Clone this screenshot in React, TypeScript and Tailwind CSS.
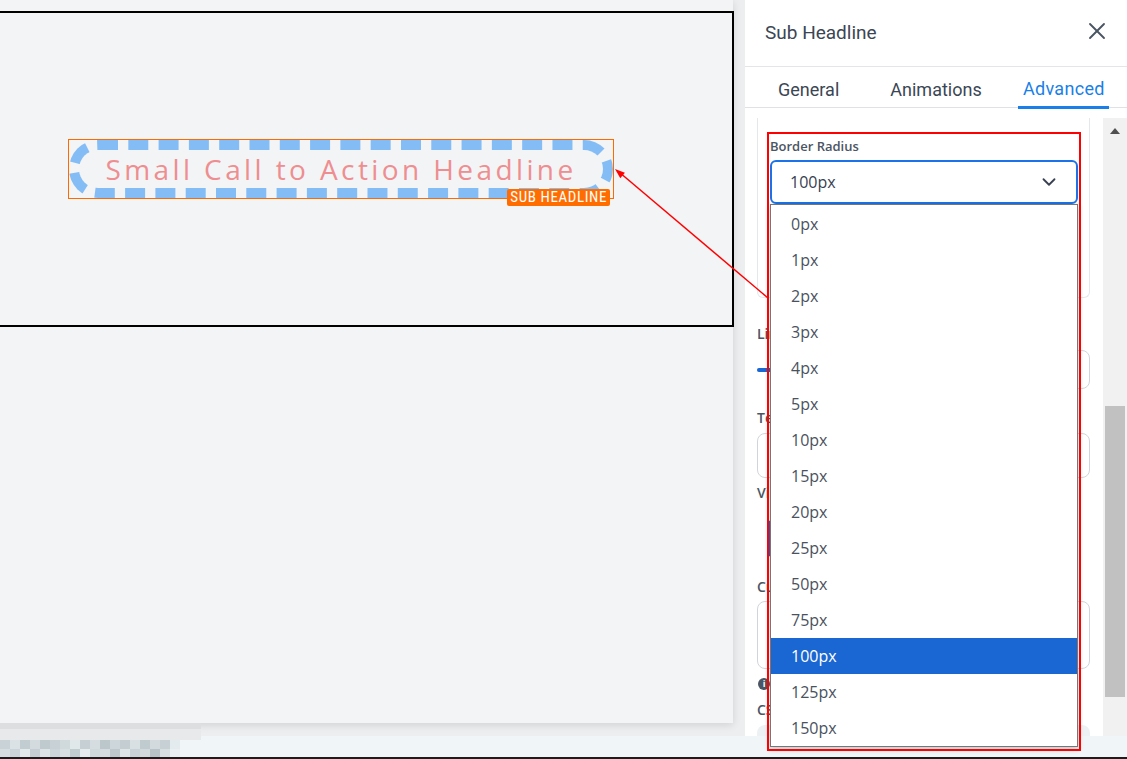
import { X, ChevronDown } from "lucide-react"

const radiusOptions = ["0px", "1px", "2px", "3px", "4px", "5px", "10px", "15px", "20px", "25px", "50px", "75px", "100px", "125px", "150px"]

// blurred bit in the bottom-left corner
const pixelColors = [
  "#c9d3d7", "#dbe2e5", "#c2cdd2", "#d3dbde", "#bfcace", "#c8d1d5", "#d0d9dc", "#e1e8ea", "#c6d0d4",
  "#d5dde0", "#bcc7cc", "#cdd6da", "#c4ced2", "#d9e0e3", "#c0cbcf", "#d2dadd", "#c7d1d5", "#e4ebee",
  "#d6dee1", "#cbd4d8", "#e3eaec", "#c5cfd3", "#dde4e7", "#ccd5d9", "#d8dfe2", "#c1ccd0", "#e6ecee",
  "#cfd8db", "#d4dcdf", "#bdc8cd", "#dfe6e8", "#c9d2d6", "#d1d9dc", "#b8c3c8", "#d7dfe1", "#eaf0f2",
]

export default function App() {
  return (
    <div className="relative w-[1127px] h-[759px] overflow-hidden flex flex-col border-b-2 border-[#1c1c1c]" style={{ fontFamily: '"Open Sans", sans-serif' }}>
      <div className="flex h-[736px] shrink-0">
        {/* Canvas */}
        <div className="w-[745px] flex flex-col bg-[#eceef0]">
          <div className="w-[733px] h-[723px] shrink-0 bg-[#f3f4f6] pt-[11px] shadow-[0_2px_8px_rgba(0,0,0,0.12)]">
            <div className="-ml-[2px] w-[736px] h-[316px] border-2 border-black pl-[68px] pt-[126px]">
              <div className="relative w-[546px] h-[60px] border border-[#ff6a00]">
                <div className="w-full h-full rounded-[100px] border-[10px] border-dashed border-[#84bdf5] flex items-center justify-center">
                  <span className="text-[28px] leading-none tracking-[3.4px] text-[#ee8e90] -mt-[1px]" style={{ fontFamily: '"Open Sans", sans-serif' }}>
                    Small Call to Action Headline
                  </span>
                </div>
                <div
                  className="absolute right-[3px] top-[49px] h-[17px] px-[3px] rounded-[2px] bg-[#ff6d00] text-white text-[15px] leading-[17px] tracking-[0.6px]"
                  style={{ fontFamily: '"Liberation Sans Narrow", "Roboto Condensed", "Liberation Sans", sans-serif' }}
                >
                  SUB HEADLINE
                </div>
              </div>
            </div>
          </div>
          <div className="flex-1 flex">
            <div className="w-[201px] flex flex-col">
              <div className="h-[6px] bg-[#dcdee0]" />
              <div className="flex-1 bg-[#e8e9eb]" />
            </div>
          </div>
        </div>

        {/* Settings panel */}
        <div className="w-[382px] bg-white flex flex-col" style={{ fontFamily: "Roboto, sans-serif" }}>
          <div className="h-[67px] shrink-0 flex items-center justify-between pl-[20px] pr-[16px] border-b border-[#e3e5e8]">
            <span className="text-[19px] text-[#3b4654]">Sub Headline</span>
            <X size={28} strokeWidth={1.6} className="text-[#4a5562] -mt-[5px]" />
          </div>
          <div className="h-[41px] shrink-0 flex border-b border-[#dfe1e4]">
            <div className="flex-1 flex justify-center">
              <span className="h-full pt-[4px] flex items-center text-[18px] text-[#3b4654]">General</span>
            </div>
            <div className="flex-1 flex justify-center">
              <span className="h-full pt-[4px] flex items-center text-[18px] text-[#3b4654]">Animations</span>
            </div>
            <div className="flex-1 flex justify-center">
              <span className="h-[42px] -mb-[1px] pt-[4px] pl-[5px] pr-[4px] flex items-center text-[18px] tracking-[0.3px] text-[#1a7fe8] border-b-[3px] border-[#1a7fe8]">Advanced</span>
            </div>
          </div>

          <div className="flex-1 pt-[10px] flex min-h-0">
            <div className="flex-1 pl-[12px] pr-[13px]" style={{ fontFamily: '"Open Sans", sans-serif' }}>
              <div className="relative h-[180px] border border-t-0 border-[#e5e7eb] rounded-b-[6px] pl-[12px] pr-[11px] pt-[19px]">
                <div className="text-[13px] leading-[18px] font-semibold text-[#4b5563]">Border Radius</div>
                <div className="mt-[5px] h-[44px] border-2 border-[#1a73e8] rounded-[6px] flex items-center justify-between pl-[18px] pr-[16px]">
                  <span className="text-[16px] text-[#374151]">100px</span>
                  <ChevronDown size={22} strokeWidth={2} className="text-[#374151]" />
                </div>

                {/* open dropdown list */}
                <div className="absolute left-[12px] top-[86px] w-[308px] pt-[1px] bg-white border border-[#767676] shadow-[0_2px_6px_rgba(0,0,0,0.2)] z-10">
                  {radiusOptions.map((opt) => (
                    <div
                      key={opt}
                      className={`h-[36px] flex items-center pl-[20px] text-[16px] ${opt === "100px" ? "bg-[#1a66d2] text-white" : "text-[#4a5260]"}`}
                    >
                      {opt}
                    </div>
                  ))}
                </div>
              </div>

              <div className="mt-[27px] text-[14px] leading-[18px] font-semibold text-[#4b5563]">Line Height</div>
              <div className="mt-[7px] h-[39px] flex items-center gap-3">
                <div className="flex-1 h-[4px] rounded-full bg-[#e5e7eb]">
                  <div className="w-[40%] h-full rounded-full bg-[#1a66d2]" />
                </div>
                <div className="w-[60px] h-full border border-[#d1d5db] rounded-[8px]" />
              </div>

              <div className="mt-[20px] text-[14px] leading-[18px] font-semibold text-[#4b5563]">Text Shadow</div>
              <div className="mt-[6px] h-[45px] border border-[#d1d5db] rounded-[8px]" />

              <div className="mt-[6px] text-[14px] leading-[18px] font-semibold text-[#4b5563]">Visibility</div>
              <div className="mt-[18px] h-[37px] flex">
                <div className="ml-[11px] w-[100px] h-full bg-[#1a66d2] rounded-[4px]" />
              </div>

              <div className="mt-[21px] text-[14px] leading-[18px] font-semibold text-[#4b5563]">Custom CSS</div>
              <div className="mt-[5px] h-[68px] border border-[#d1d5db] rounded-[8px]" />

              <div className="mt-[8px] h-[14px] flex items-center gap-2 pl-[1px]">
                <span className="w-[12px] h-[12px] rounded-full bg-[#4b5563] text-white text-[9px] leading-[12px] text-center font-bold">i</span>
                <span className="text-[12px] text-[#6b7280]">Class names without a dot</span>
              </div>
              <div className="mt-[10px] text-[14px] leading-[18px] font-semibold text-[#4b5563]">CSS Class</div>
              <div className="mt-[6px] h-[11px] bg-[#eef1f4] rounded-t-[8px]" />
            </div>

            {/* scrollbar */}
            <div className="w-[24px] bg-[#f1f1f1] flex flex-col items-center pt-[10px]">
              <svg width="10" height="6" viewBox="0 0 10 6">
                <polygon points="5,0 10,6 0,6" fill="#505050" />
              </svg>
              <div className="mt-[272px] w-[20px] h-[291px] bg-[#c1c1c1]" />
            </div>
          </div>
        </div>
      </div>

      {/* bottom strip */}
      <div className="flex-1 flex bg-[#f0f5f8]">
        <div className="w-[201px] flex flex-col">
          <div className="h-[4px] bg-[#e8e9eb]" />
          <div className="flex-1 grid grid-cols-[repeat(18,10px)] grid-rows-2 w-[185px] overflow-hidden">
            {pixelColors.map((c, i) => (
              <div key={i} style={{ backgroundColor: c }} />
            ))}
          </div>
        </div>
      </div>

      {/* annotation overlay */}
      <div className="absolute left-[767px] top-[132px] w-[314px] h-[619px] border-2 border-[#ff0000] pointer-events-none z-20" />
      <svg className="absolute inset-0 pointer-events-none z-20" width="1127" height="759">
        <line x1="768" y1="298" x2="619" y2="172" stroke="#ff0000" strokeWidth="1.5" />
        <polygon points="615,169 620.3,178.2 624.9,172.8" fill="#ff0000" />
      </svg>
    </div>
  )
}
